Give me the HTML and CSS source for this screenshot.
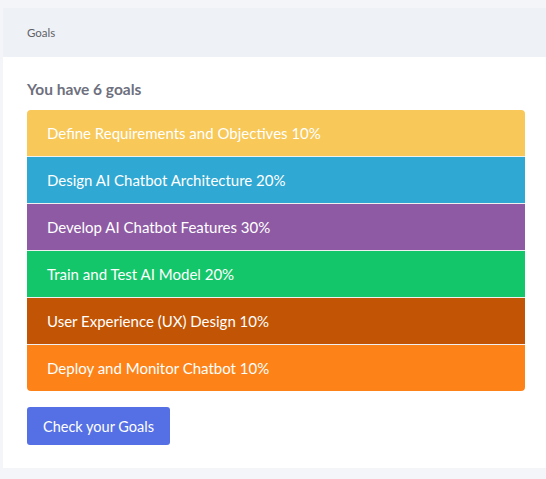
FILE: index.html
```html
<!DOCTYPE html>
<html>
<head>
<meta charset="utf-8">
<link rel="stylesheet" href="styles.css">
</head>
<body>
<div class="card">
  <div class="card-header">Goals</div>
  <div class="card-body">
    <div class="title">You have 6 goals</div>
    <ul class="goals">
      <li class="goal yellow">Define Requirements and Objectives 10%</li>
      <li class="goal blue">Design AI Chatbot Architecture 20%</li>
      <li class="goal purple">Develop AI Chatbot Features 30%</li>
      <li class="goal green">Train and Test AI Model 20%</li>
      <li class="goal brown">User Experience (UX) Design 10%</li>
      <li class="goal orange">Deploy and Monitor Chatbot 10%</li>
    </ul>
    <button class="btn">Check your Goals</button>
  </div>
</div>
</body>
</html>
```
FILE: styles.css
```css
html, body {
  margin: 0;
  padding: 0;
  background: #f3f5f9;
  overflow: hidden;
  font-family: "Lato", "Open Sans", sans-serif;
}
.card {
  margin: 8px 0 0 3px;
  width: 546px;
  background: #fff;
}
.card-header {
  height: 49px;
  display: flex;
  align-items: center;
  padding-left: 24px;
  background: #eef1f6;
  color: #5f6168;
  font-size: 11.5px;
}
.card-body {
  padding: 22px 24px 23px 24px;
}
.title {
  font-size: 15.5px;
  font-weight: 700;
  color: #6e707e;
  line-height: 20px;
  margin-bottom: 11px;
}
.goals {
  list-style: none;
  margin: 0;
  padding: 0;
  border-radius: 4px;
  overflow: hidden;
}
.goal {
  height: 46px;
  line-height: 46px;
  padding: 0 20px;
  color: #fff;
  font-size: 15px;
}
.goal + .goal {
  border-top: 1px solid #f0f0f0;
}
.yellow { background: #f8c858; }
.blue { background: #2fa8d3; }
.purple { background: #8e5aa4; }
.green { background: #13c66a; }
.brown { background: #c25505; }
.orange { background: #fd8318; }
.btn {
  display: block;
  margin-top: 16px;
  height: 38px;
  padding: 0 16px;
  border: none;
  border-radius: 3px;
  background: #5570e4;
  color: #fff;
  font-family: inherit;
  font-size: 14.5px;
}
```
